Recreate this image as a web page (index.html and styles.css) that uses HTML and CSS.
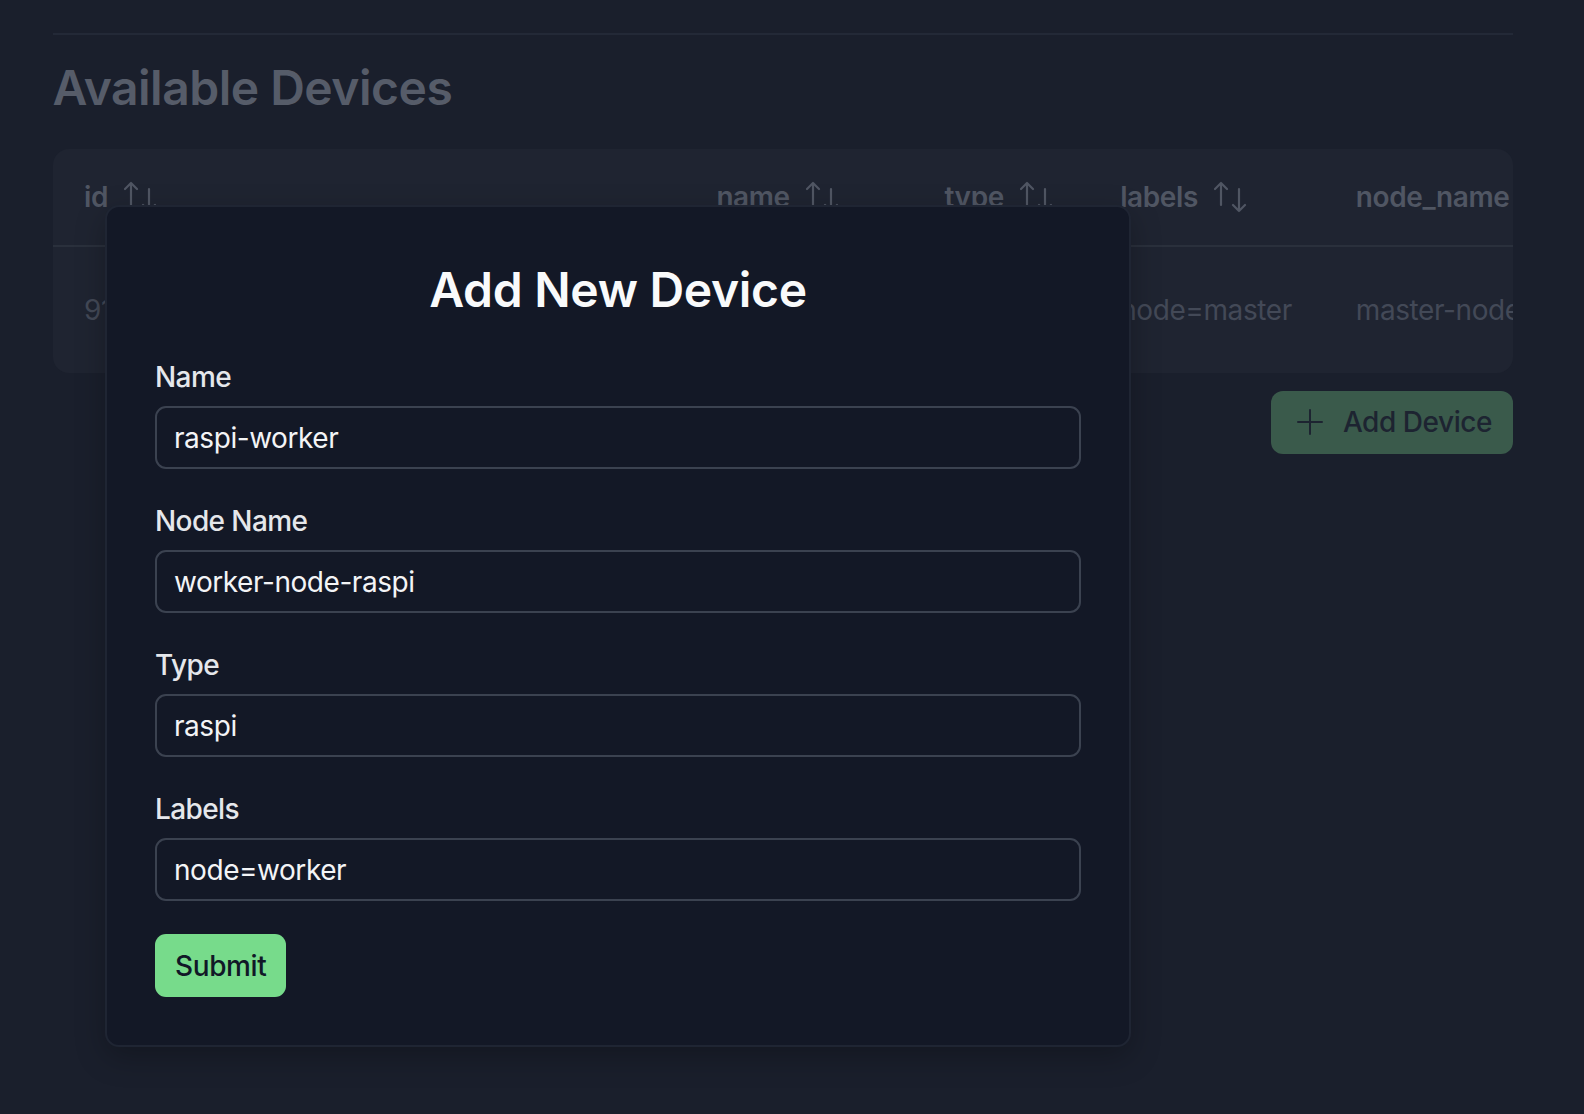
FILE: index.html
```html
<!DOCTYPE html>
<html lang="en">
<head>
<meta charset="utf-8">
<title>Devices</title>
<link rel="stylesheet" href="styles.css">
</head>
<body>
<main class="page">
  <div class="rule"></div>
  <h1 class="page-title">Available Devices</h1>
  <div class="table-card">
    <table class="devices">
      <colgroup>
        <col class="c-id"><col class="c-name"><col class="c-type"><col class="c-labels"><col class="c-node">
      </colgroup>
      <thead>
        <tr>
          <th><span class="th-in">id <svg class="sort" viewBox="0 0 34 32"><path d="M7 2V24M1 8L7 2L13 8M25 8V30M19 24L25 30L31 24"/></svg></span></th>
          <th><span class="th-in">name <svg class="sort" viewBox="0 0 34 32"><path d="M7 2V24M1 8L7 2L13 8M25 8V30M19 24L25 30L31 24"/></svg></span></th>
          <th><span class="th-in">type <svg class="sort" viewBox="0 0 34 32"><path d="M7 2V24M1 8L7 2L13 8M25 8V30M19 24L25 30L31 24"/></svg></span></th>
          <th><span class="th-in">labels <svg class="sort" viewBox="0 0 34 32"><path d="M7 2V24M1 8L7 2L13 8M25 8V30M19 24L25 30L31 24"/></svg></span></th>
          <th><span class="th-in">node_name <svg class="sort" viewBox="0 0 34 32"><path d="M7 2V24M1 8L7 2L13 8M25 8V30M19 24L25 30L31 24"/></svg></span></th>
        </tr>
      </thead>
      <tbody>
        <tr>
          <td>91f3c2a8</td>
          <td>raspi-master</td>
          <td>raspi</td>
          <td>node=master</td>
          <td>master-node-raspi</td>
        </tr>
      </tbody>
    </table>
  </div>
  <div class="actions">
    <button class="add-btn" type="button">
      <svg class="plus" viewBox="0 0 28 28"><path d="M14 2V26M2 14H26"/></svg>
      <span>Add Device</span>
    </button>
  </div>

  <section class="modal">
    <h2 class="modal-title">Add New Device</h2>
    <form class="form">
      <div class="field">
        <label class="label">Name</label>
        <div class="input">raspi-worker</div>
      </div>
      <div class="field">
        <label class="label">Node Name</label>
        <div class="input">worker-node-raspi</div>
      </div>
      <div class="field">
        <label class="label">Type</label>
        <div class="input">raspi</div>
      </div>
      <div class="field">
        <label class="label">Labels</label>
        <div class="input">node=worker</div>
      </div>
      <div class="submit-row">
        <button class="submit" type="button">Submit</button>
      </div>
    </form>
  </section>
</main>
</body>
</html>
```
FILE: styles.css
```css
* { box-sizing: border-box; }

html, body {
  margin: 0;
  padding: 0;
  background: #1a1f2c;
  font-family: Inter, "Noto Sans", sans-serif;
  height: 100%;
  overflow: hidden;
}

.page {
  position: relative;
  padding: 33px 0 0 52.5px;
  width: 1513px;
  height: 1114px;
}

.rule {
  height: 2px;
  background: #232937;
}

.page-title {
  margin: 29px 0 0;
  font-size: 48px;
  line-height: 48px;
  font-weight: 600;
  color: #565c69;
  letter-spacing: -0.5px;
}

.table-card {
  margin-top: 37px;
  background: #1f2431;
  border-radius: 16px;
  overflow: hidden;
}

.devices {
  border-collapse: collapse;
  table-layout: fixed;
  width: 1572px;
  font-size: 28px;
  letter-spacing: -0.4px;
  white-space: nowrap;
}

.c-id { width: 632px; }
.c-name { width: 228px; }
.c-type { width: 175.5px; }
.c-labels { width: 235.5px; }
.c-node { width: 300px; }

.devices th {
  height: 96.5px;
  padding: 0 0 0 31.5px;
  text-align: left;
  font-weight: 600;
  color: #505663;
  border-bottom: 2px solid #2a303c;
}

.th-in {
  display: inline-flex;
  align-items: center;
  gap: 16px;
}

.sort {
  width: 34px;
  height: 32px;
  fill: none;
  stroke: #505663;
  stroke-width: 2.2;
  stroke-linecap: round;
  stroke-linejoin: round;
}

.devices td {
  height: 127.5px;
  padding: 0 0 0 31.5px;
  color: #434957;
  font-weight: 400;
  overflow: hidden;
}

.actions {
  display: flex;
  justify-content: flex-end;
  margin-top: 17.5px;
}

.add-btn {
  display: inline-flex;
  align-items: center;
  gap: 19px;
  height: 63px;
  padding: 0 21px 0 25px;
  border: none;
  border-radius: 12px;
  background: #3a5a4b;
  color: #1d2431;
  font-family: inherit;
  font-size: 28px;
  font-weight: 500;
  letter-spacing: -0.45px;
}

.plus {
  width: 28px;
  height: 28px;
  fill: none;
  stroke: #1d2431;
  stroke-width: 2;
  stroke-linecap: round;
}

.modal {
  position: absolute;
  left: 105px;
  top: 205px;
  width: 1026px;
  height: 842px;
  padding: 48px;
  background: #131826;
  border: 2px solid #1f2533;
  border-radius: 14px;
  box-shadow: 0 10px 30px rgba(0, 0, 0, 0.25);
}

.modal-title {
  margin: 11px 0 42px;
  text-align: center;
  font-size: 48px;
  line-height: 48px;
  font-weight: 600;
  color: #f9fafb;
  letter-spacing: -0.3px;
}

.form {
  display: flex;
  flex-direction: column;
}

.field {
  display: flex;
  flex-direction: column;
  gap: 8px;
  margin-bottom: 31px;
}

.label {
  font-size: 28px;
  line-height: 42px;
  font-weight: 500;
  color: #e5e7eb;
  letter-spacing: -0.6px;
}

.input {
  height: 63px;
  display: flex;
  align-items: center;
  padding: 0 17px;
  border: 2px solid #3b4250;
  border-radius: 11px;
  background: #131826;
  font-size: 28px;
  color: #f3f4f6;
  letter-spacing: -0.45px;
}

.submit-row {
  padding-top: 2px;
  display: flex;
}

.submit {
  height: 63px;
  padding: 0 20px;
  border: none;
  border-radius: 11px;
  background: #77db8b;
  color: #111827;
  font-family: inherit;
  font-size: 28px;
  font-weight: 500;
  letter-spacing: -0.4px;
}
```
